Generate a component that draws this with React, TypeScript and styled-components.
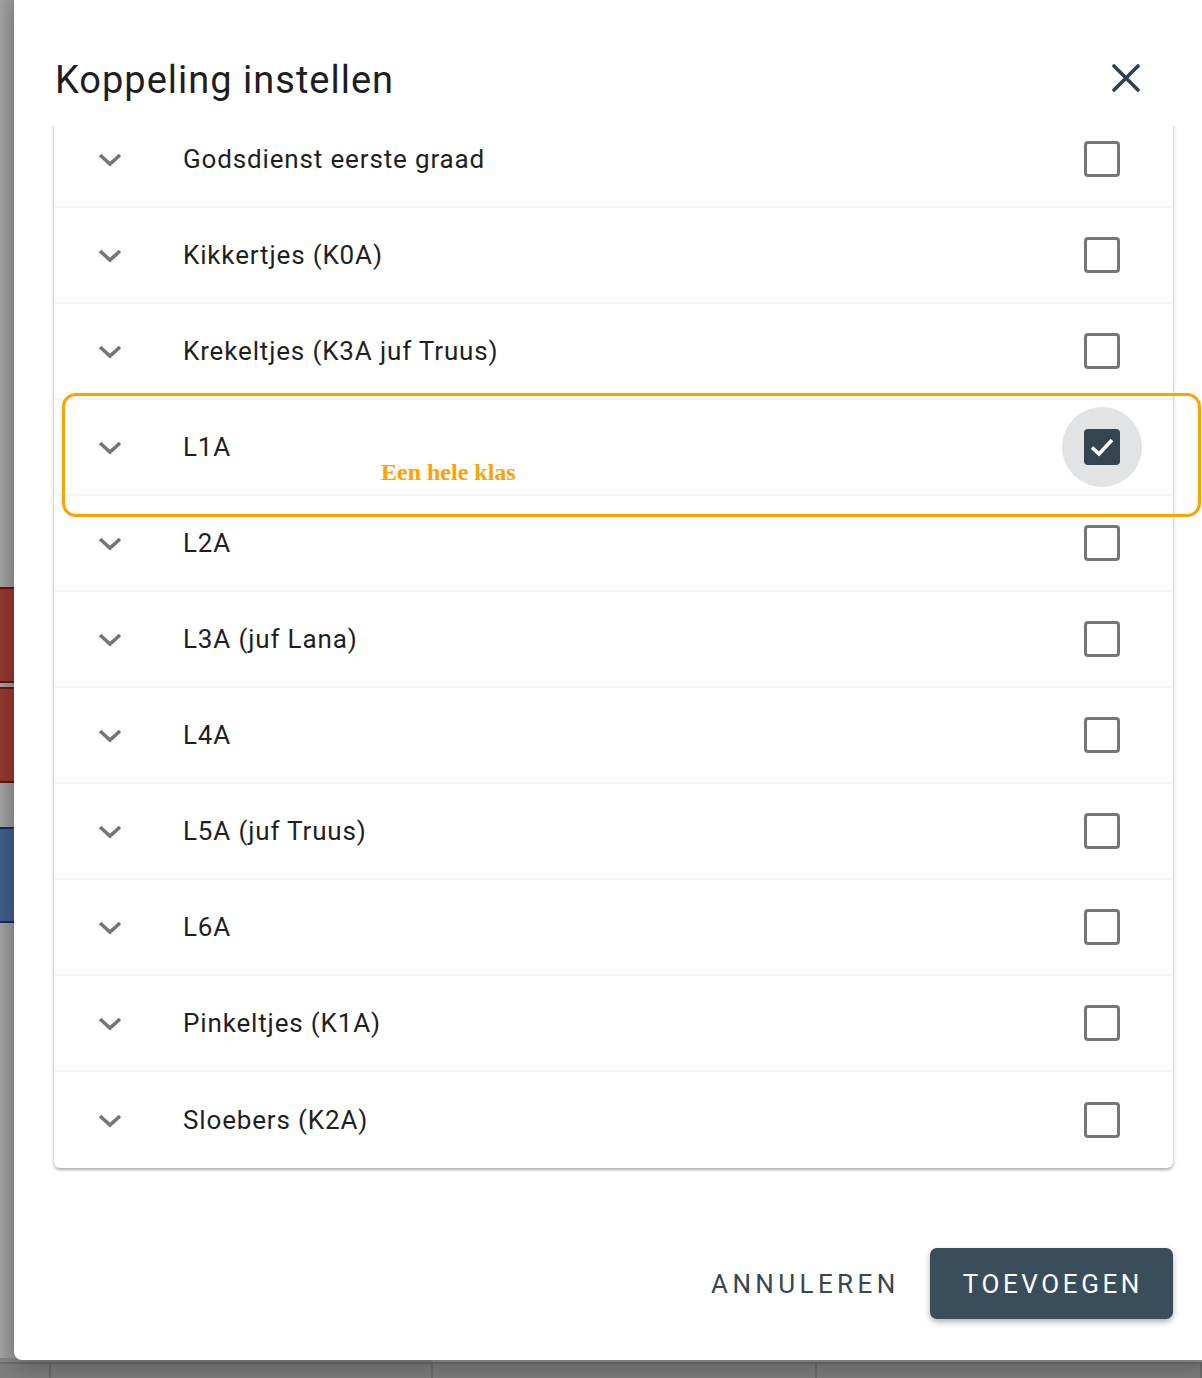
import { useState } from 'react'
import styled, { createGlobalStyle, css } from 'styled-components'

const GlobalStyle = createGlobalStyle`
  html, body {
    margin: 0;
    padding: 0;
    background: #999999;
    font-family: Roboto, "Noto Sans", "Liberation Sans", sans-serif;
  }
  * { box-sizing: border-box; }
`

const Page = styled.div`
  position: relative;
  width: 1202px;
  height: 1378px;
  overflow: hidden;
  background: #9b9b9b;
`

// the calendar that sits dimmed behind the dialog
const Calendar = styled.div`
  display: grid;
  grid-template-columns: 51px 382px 384px 1fr;
  grid-template-rows: 33px 82px 130px 279px 719px 1fr;
  height: 1362px;
  background: linear-gradient(90deg, #a3a3a3 0, #959595 14px, #9a9a9a 100%);
`
const CalendarCell = styled.div`
  border-bottom: 2px solid #858585;
  border-right: 2px solid #8c8c8c;
`
const EventColumn = styled.div`
  grid-column: 1;
  grid-row: 1 / -1;
  display: flex;
  flex-direction: column;
  padding-top: 587px;
  gap: 4px;
`
const EventBlock = styled.div<{ $tone: 'red' | 'blue'; $gapBefore?: number }>`
  height: 96px;
  margin-top: ${({ $gapBefore }) => $gapBefore ?? 0}px;
  ${({ $tone }) =>
    $tone === 'red'
      ? css`
          background: #933730;
          border-top: 2px solid #6b1212;
          border-bottom: 2px solid #6b1212;
        `
      : css`
          background: #3f5d8a;
          border-top: 2px solid #142b5c;
          border-bottom: 2px solid #142b5c;
        `}
`
const CalendarFooter = styled.div`
  height: 16px;
  background: #7e7e7e;
  border-top: 2px solid #6f6f6f;
  display: grid;
  grid-template-columns: 51px 382px 384px 1fr;
`
const FooterCell = styled.div`
  border-right: 2px solid #6c6c6c;
`

const Dialog = styled.div`
  position: absolute;
  left: 14px;
  top: -10px;
  width: 1199px;
  height: 1370px;
  background: #ffffff;
  border-radius: 8px;
  box-shadow: 0 8px 24px rgba(0, 0, 0, 0.25);
  display: flex;
  flex-direction: column;
`
const DialogHeader = styled.div`
  display: flex;
  align-items: center;
  justify-content: space-between;
  padding: 67px 69px 23px 41px;
`
const DialogTitle = styled.h2`
  margin: 0;
  font-size: 38px;
  line-height: 46px;
  font-weight: 400;
  color: #1e1e1e;
  letter-spacing: 1px;
`
const CloseButton = styled.button`
  display: flex;
  align-items: center;
  justify-content: center;
  width: 36px;
  height: 36px;
  padding: 0;
  margin-top: -4px;
  border: none;
  background: none;
  cursor: pointer;
`
const ScrollArea = styled.div`
  overflow: hidden;
  padding: 0 40px 12px 40px;
`
const Paper = styled.div`
  margin-top: -14px;
  background: #ffffff;
  border-radius: 6px;
  box-shadow: 0 2px 3px rgba(0, 0, 0, 0.28), 0 0 6px rgba(0, 0, 0, 0.1);
`
const Row = styled.div`
  position: relative;
  display: flex;
  align-items: center;
  height: 96px;
  padding: 0 53px 0 44px;
  border-bottom: 2px solid #f4f4f4;
  background: linear-gradient(180deg, #ffffff 0, #ffffff 86px, #fafafa 94px);
  &:last-child {
    border-bottom: none;
    background: none;
  }
`
const Chevron = styled.span`
  display: flex;
  width: 24px;
  height: 24px;
  margin-right: 61px;
`
const RowLabel = styled.span`
  flex: 1;
  font-size: 26px;
  color: #1f1f1f;
  letter-spacing: 0.85px;
`
const CheckHolder = styled.span<{ $focused: boolean }>`
  display: flex;
  align-items: center;
  justify-content: center;
  width: 80px;
  height: 80px;
  margin-right: -22px;
  border-radius: 50%;
  background: ${({ $focused }) => ($focused ? '#e2e3e5' : 'transparent')};
  cursor: pointer;
`
const CheckBox = styled.span<{ $checked: boolean }>`
  display: flex;
  align-items: center;
  justify-content: center;
  width: 36px;
  height: 36px;
  border-radius: 4px;
  ${({ $checked }) =>
    $checked
      ? css`
          background: #34454f;
        `
      : css`
          border: 3.5px solid #767676;
        `}
`
const Callout = styled.div`
  position: absolute;
  z-index: 2;
  left: 8px;
  top: -7px;
  width: calc(100% + 20px);
  height: 124px;
  border: 3px solid #ffa200;
  border-radius: 14px;
  pointer-events: none;
`
const CalloutLabel = styled.span`
  position: absolute;
  left: 316px;
  top: 64px;
  font-family: "Liberation Serif", "Times New Roman", serif;
  font-weight: 700;
  font-size: 24px;
  line-height: 1;
  color: #ffa200;
`
const DialogActions = styled.div`
  display: flex;
  align-items: center;
  justify-content: flex-end;
  gap: 30px;
  padding: 70px 40px 41px 0;
`
const TextButton = styled.button`
  border: none;
  background: none;
  padding: 0;
  font-family: inherit;
  font-size: 26px;
  letter-spacing: 4.4px;
  color: #37474f;
  cursor: pointer;
`
const PrimaryButton = styled.button`
  height: 71px;
  padding: 0 30px 0 33px;
  border: none;
  border-radius: 7px;
  background: #3a4d5a;
  color: #ffffff;
  font-family: inherit;
  font-size: 26px;
  letter-spacing: 3.6px;
  box-shadow: 0 3px 6px rgba(0, 0, 0, 0.3);
  cursor: pointer;
`

const groups: string[] = [
  'Godsdienst eerste graad',
  'Kikkertjes (K0A)',
  'Krekeltjes (K3A juf Truus)',
  'L1A',
  'L2A',
  'L3A (juf Lana)',
  'L4A',
  'L5A (juf Truus)',
  'L6A',
  'Pinkeltjes (K1A)',
  'Sloebers (K2A)',
]

function ChevronIcon() {
  return (
    <svg width="24" height="24" viewBox="0 0 24 24">
      <path d="M2 8 L12 17 L22 8" fill="none" stroke="#767676" strokeWidth="3.6" />
    </svg>
  )
}

function CheckIcon() {
  return (
    <svg width="28" height="28" viewBox="0 0 28 28">
      <path d="M4 14.5 L11 21 L24 7" fill="none" stroke="#ffffff" strokeWidth="3.6" />
    </svg>
  )
}

export default function App() {
  const [checked, setChecked] = useState<string[]>(['L1A'])

  const toggle = (group: string) => {
    setChecked(checked.includes(group) ? checked.filter((g) => g !== group) : [...checked, group])
  }

  return (
    <Page>
      <GlobalStyle />
      <Calendar>
        {Array.from({ length: 4 * 6 }).map((_, i) => (
          <CalendarCell key={i} />
        ))}
        <EventColumn>
          <EventBlock $tone="red" />
          <EventBlock $tone="red" />
          <EventBlock $tone="blue" $gapBefore={40} />
        </EventColumn>
      </Calendar>
      <CalendarFooter>
        <FooterCell />
        <FooterCell />
        <FooterCell />
        <FooterCell />
      </CalendarFooter>

      <Dialog>
        <DialogHeader>
          <DialogTitle>Koppeling instellen</DialogTitle>
          <CloseButton aria-label="Sluiten">
            <svg width="28" height="28" viewBox="0 0 28 28">
              <path d="M2 2 L26 26 M26 2 L2 26" stroke="#2c4250" strokeWidth="3.6" strokeLinecap="round" />
            </svg>
          </CloseButton>
        </DialogHeader>
        <ScrollArea>
          <Paper>
            {groups.map((group) => (
              <Row key={group}>
                <Chevron>
                  <ChevronIcon />
                </Chevron>
                <RowLabel>{group}</RowLabel>
                <CheckHolder $focused={group === 'L1A'} onClick={() => toggle(group)}>
                  <CheckBox $checked={checked.includes(group)}>
                    {checked.includes(group) && <CheckIcon />}
                  </CheckBox>
                </CheckHolder>
                {group === 'L1A' && (
                  <Callout>
                    <CalloutLabel>Een hele klas</CalloutLabel>
                  </Callout>
                )}
              </Row>
            ))}
          </Paper>
        </ScrollArea>
        <DialogActions>
          <TextButton>ANNULEREN</TextButton>
          <PrimaryButton>TOEVOEGEN</PrimaryButton>
        </DialogActions>
      </Dialog>
    </Page>
  )
}
